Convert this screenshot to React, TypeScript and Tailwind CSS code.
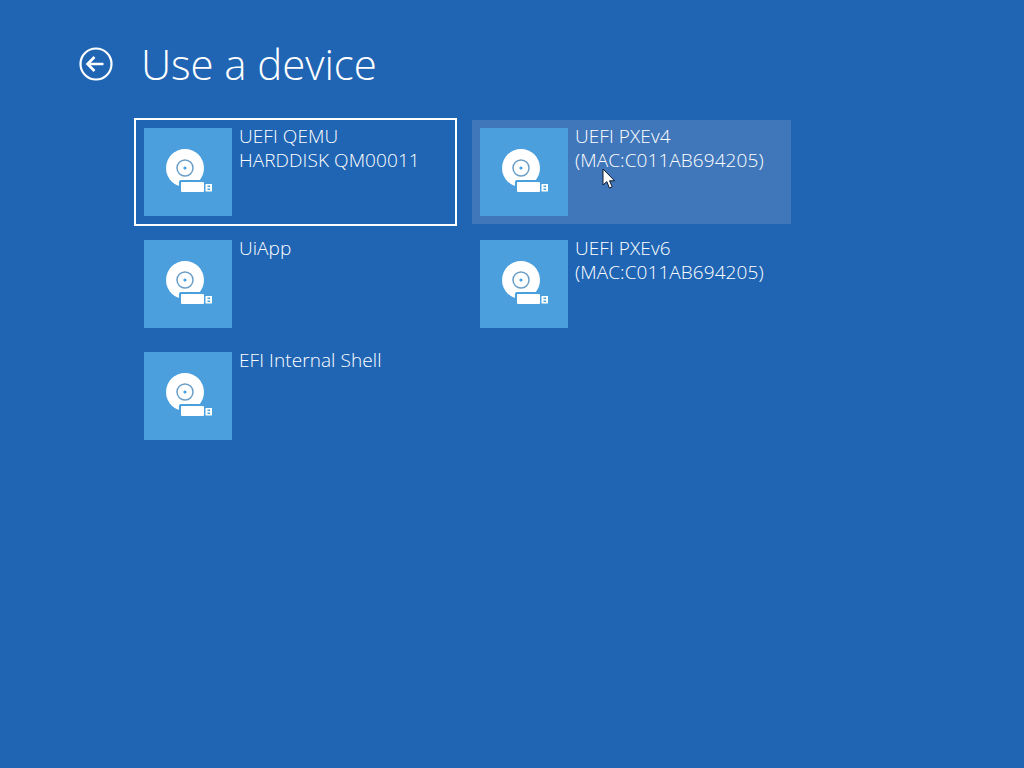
// App.tsx
import React from 'react';

const devices = [
  { id: 'qemu', lines: ['UEFI QEMU', 'HARDDISK QM00011'], focused: true },
  { id: 'uiapp', lines: ['UiApp'] },
  { id: 'shell', lines: ['EFI Internal Shell'] },
  { id: 'pxe4', lines: ['UEFI PXEv4', '(MAC:C011AB694205)'], hovered: true },
  { id: 'pxe6', lines: ['UEFI PXEv6', '(MAC:C011AB694205)'] },
];

function DeviceIcon() {
  return (
    <svg width="88" height="88" viewBox="0 0 88 88" className="block">
      <circle cx="41" cy="40" r="19" fill="#ffffff" />
      <circle cx="41" cy="40" r="8" fill="none" stroke="#6a9fc8" strokeWidth="1.5" />
      <circle cx="41" cy="40" r="1.6" fill="#4a9fdc" />
      <rect x="35" y="52" width="27" height="14" rx="2" fill="#4a9fdc" />
      <rect x="37" y="54" width="23" height="10" rx="1" fill="#ffffff" />
      <rect x="61.5" y="56" width="6.5" height="7.5" fill="#ffffff" />
      <rect x="63.5" y="57.5" width="2.5" height="1.5" fill="#4a9fdc" />
      <rect x="63.5" y="60.5" width="2.5" height="1.5" fill="#4a9fdc" />
    </svg>
  );
}

function DeviceCard({ lines, focused, hovered }: { lines: string[]; focused?: boolean; hovered?: boolean }) {
  return (
    <div
      className={`relative flex h-[104px] w-[319px] p-2 ${hovered ? 'bg-[#3f77ba]' : ''} ${
        focused ? 'outline-2 outline-white' : ''
      }`}
    >
      <div className="h-[88px] w-[88px] shrink-0 bg-[#4a9fdc]">
        <DeviceIcon />
      </div>
      <div className="-mt-[4px] pl-[7px] text-[19px] font-light leading-[24px] tracking-[0.08px] text-white">
        {lines.map((line) => (
          <div key={line} className="whitespace-nowrap">{line}</div>
        ))}
      </div>
      {hovered && (
        <svg width="15" height="22" viewBox="0 0 15 22" className="absolute left-[130px] top-[48px]">
          <path d="M1 1 L1 17 L4.8 13.6 L7.4 20 L10.2 18.8 L7.6 12.8 L12.6 12.8 Z" fill="#ffffff" stroke="#111827" strokeWidth="1" />
        </svg>
      )}
    </div>
  );
}

export default function App() {
  return (
    <div className="h-[768px] w-[1024px] overflow-hidden bg-[#1f65b4] font-['Open_Sans','Noto_Sans',sans-serif] text-white">
      {/* Header */}
      <div className="flex h-[120px] items-start pl-[79px] pt-[37px]">
        <svg width="34" height="34" viewBox="0 0 34 34" className="mt-[10px]">
          <circle cx="17" cy="17" r="15.5" fill="none" stroke="#ffffff" strokeWidth="2.2" />
          <path d="M24.5 17 H8.5 M15.5 10 L8.5 17 L15.5 24" fill="none" stroke="#ffffff" strokeWidth="2.6" />
        </svg>
        <h1 className="ml-[28px] -mt-px text-[42px] font-light leading-[56px] tracking-[-0.1px]">Use a device</h1>
      </div>

      {/* Devices */}
      <div className="grid grid-flow-col grid-cols-[319px_319px] grid-rows-[104px_104px_104px] gap-x-[17px] gap-y-2 pl-[136px]">
        {devices.map((d) => (
          <DeviceCard key={d.id} lines={d.lines} focused={d.focused} hovered={d.hovered} />
        ))}
      </div>
    </div>
  );
}
